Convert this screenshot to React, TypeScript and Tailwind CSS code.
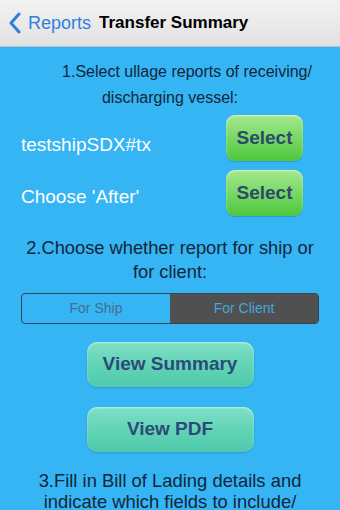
export default function App() {
  const font = { fontFamily: '"Liberation Sans", Arial, sans-serif' };
  return (
    <div className="w-[340px] h-[510px] overflow-hidden bg-[#35b5f4]" style={font}>
      {/* nav bar */}
      <div className="h-[47px] bg-gradient-to-b from-[#f2f2f2] to-[#e2e2e2] border-b border-[#b8c4cc] flex items-center">
        <svg width="14" height="22" viewBox="0 0 14 22" className="ml-[8px]">
          <path d="M11 2 L3 11 L11 20" fill="none" stroke="#2f7fe0" strokeWidth="3" strokeLinecap="round" strokeLinejoin="round" />
        </svg>
        <span className="ml-[6px] text-[18px] text-[#2f7fe0]">Reports</span>
        <span className="ml-[8px] text-[17px] font-bold text-black">Transfer Summary</span>
      </div>

      <div className="pt-[12px] text-[16px] leading-[26px] text-[#13263a]">
        <div className="pl-[34px] text-center">1.Select ullage reports of receiving/</div>
        <div className="text-center">discharging vessel:</div>
      </div>

      <div className="mt-[4px] flex flex-col gap-[9px] pl-[21px] pr-[37px]">
        <div className="flex items-start justify-between">
          <span className="mt-[19px] text-[19px] leading-[22px] text-white">testshipSDX#tx</span>
          <SelectButton />
        </div>
        <div className="flex items-start justify-between">
          <span className="mt-[16px] text-[19px] leading-[22px] text-white">Choose 'After'</span>
          <SelectButton />
        </div>
      </div>

      <div className="mt-[20px] px-[10px] text-center text-[18.3px] leading-[24px] text-[#13263a]">
        2.Choose whether report for ship or
        <br />
        for client:
      </div>

      <div className="mx-[21px] mt-[9px] h-[31px] flex rounded-[4px] border border-[#2e4656] overflow-hidden text-[14px]">
        <div className="flex-1 flex items-center justify-center text-[#4a6d8c]">For Ship</div>
        <div className="flex-1 flex items-center justify-center bg-[#505050] text-[#45a6de]">For Client</div>
      </div>

      <div className="mt-[18px] flex flex-col items-center gap-[20px]">
        <ViewButton label="View Summary" />
        <ViewButton label="View PDF" />
      </div>

      <div className="mt-[18px] px-[4px] text-center text-[18.4px] leading-[21px] text-[#13263a]">
        3.Fill in Bill of Lading details and
        <br />
        indicate which fields to include/
      </div>
    </div>
  );
}

function SelectButton() {
  return (
    <button className="w-[77px] h-[46px] rounded-[9px] bg-gradient-to-b from-[#a4e88c] via-[#78d866] to-[#4cc73a] shadow-[inset_0_1px_2px_rgba(255,255,255,0.6),0_1px_1px_rgba(0,0,0,0.15)] text-[19px] font-bold text-[#2d4a6c]">
      Select
    </button>
  );
}

function ViewButton({ label }: { label: string }) {
  return (
    <button className="w-[167px] h-[45px] rounded-[10px] bg-gradient-to-b from-[#7ee0c6] via-[#62d4b6] to-[#4ec9ab] shadow-[inset_0_1px_2px_rgba(255,255,255,0.5),0_1px_2px_rgba(0,0,0,0.15)] text-[19px] font-bold text-[#2c4a78]">
      {label}
    </button>
  );
}
